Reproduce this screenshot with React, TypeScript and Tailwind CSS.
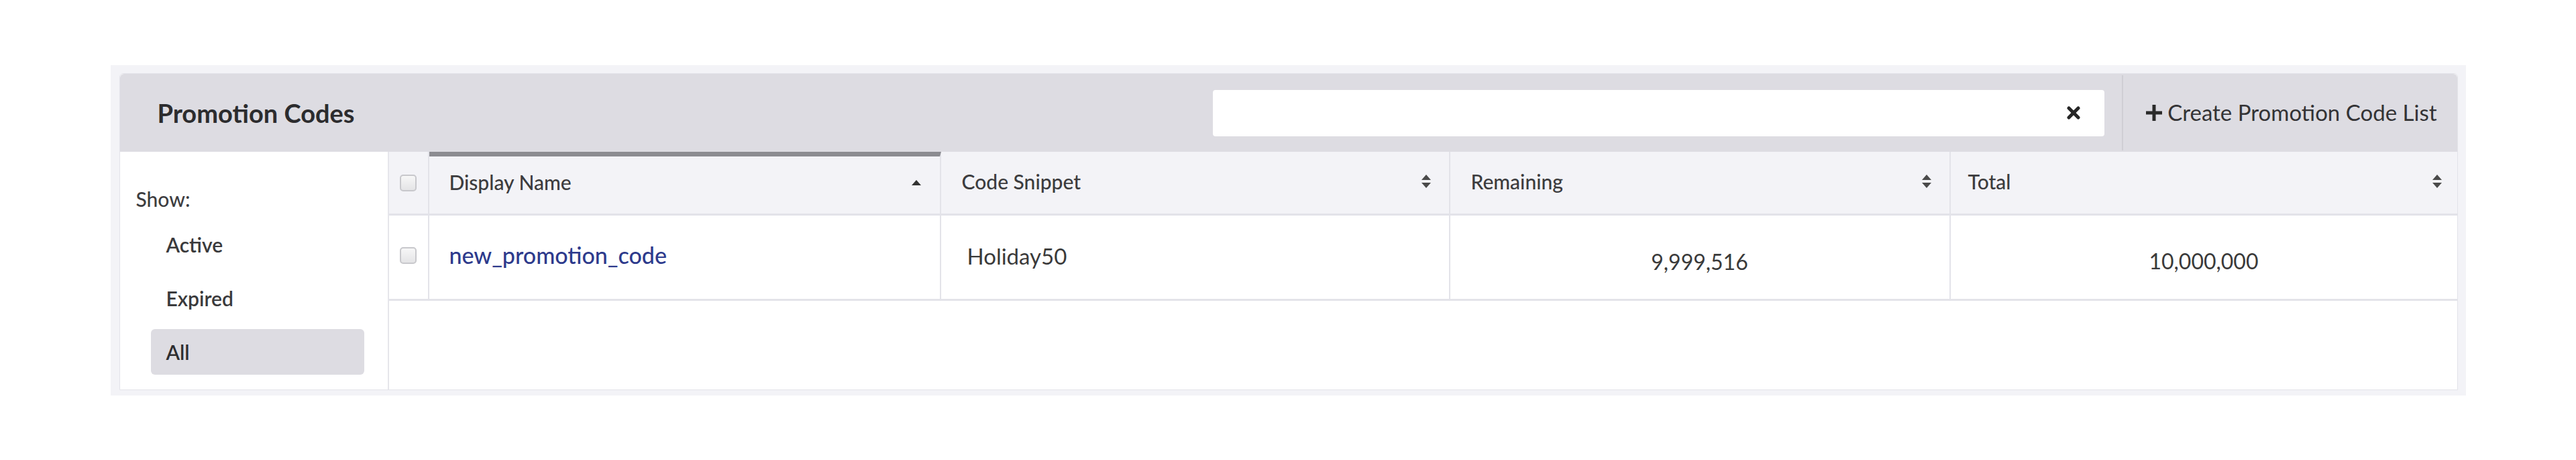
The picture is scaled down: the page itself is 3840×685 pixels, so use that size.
import React from 'react'

const font = { fontFamily: 'Lato, "Open Sans", sans-serif' }

function SortBoth() {
  return (
    <svg width="16" height="20" viewBox="0 0 16 20" className="shrink-0">
      <polygon points="8,0 15,8 1,8" fill="#4a4a4a" />
      <polygon points="1,12 15,12 8,20" fill="#4a4a4a" />
    </svg>
  )
}

function SortUp() {
  return (
    <svg width="14" height="8" viewBox="0 0 14 8" className="shrink-0">
      <polygon points="7,0 14,8 0,8" fill="#333333" />
    </svg>
  )
}

function Checkbox() {
  return (
    <span className="block w-[25px] h-[25px] rounded-[5px] border-2 border-[#c8c8cc] bg-gradient-to-b from-[#f7f7f7] to-[#e4e4e6]" />
  )
}

const columns = [
  { key: 'name', label: 'Display Name', sort: 'up' },
  { key: 'snippet', label: 'Code Snippet', sort: 'both' },
  { key: 'remaining', label: 'Remaining', sort: 'both' },
  { key: 'total', label: 'Total', sort: 'both' },
]

const filters = [
  { label: 'Active', active: false },
  { label: 'Expired', active: false },
  { label: 'All', active: true },
]

export default function App() {
  return (
    <div className="min-h-[685px] bg-white pt-[97px]" style={font}>
      <div className="w-[3511px] mx-auto bg-[#f3f3f7] pt-[12px] pb-[8px] pl-[13px] pr-[12px]">
        <div className="bg-white border border-[#e3e3e9] rounded-t-[6px]">
          {/* header */}
          <div className="flex h-[116px] items-stretch bg-[#dddce2] rounded-t-[6px]">
            <div className="flex items-center pl-[56px] text-[38px] font-bold text-[#2c2c2e] flex-1">
              Promotion Codes
            </div>
            <div className="flex items-center mr-[26px]">
              <div className="w-[1329px] h-[69px] bg-white rounded-[4px] flex items-center justify-end pr-[36px]">
                <svg width="20" height="20" viewBox="0 0 20 20">
                  <line x1="3" y1="3" x2="17" y2="17" stroke="#262626" strokeWidth="5" strokeLinecap="round" />
                  <line x1="17" y1="3" x2="3" y2="17" stroke="#262626" strokeWidth="5" strokeLinecap="round" />
                </svg>
              </div>
            </div>
            <div className="w-[2px] bg-[#cfced4] my-[2px]" />
            <div className="flex items-center gap-[8px] pl-[34px] pr-[30px] text-[33px] text-[#333335]">
              <svg width="24" height="24" viewBox="0 0 24 24">
                <rect x="9.5" y="0" width="5" height="24" fill="#2a2a2a" />
                <rect x="0" y="9.5" width="24" height="5" fill="#2a2a2a" />
              </svg>
              <span>Create Promotion Code List</span>
            </div>
          </div>

          {/* body */}
          <div className="flex h-[354px]">
            <div className="w-[401px] shrink-0 border-r-2 border-[#e6e6eb] pt-[50px]">
              <div className="h-[40px] flex items-center pl-[24px] text-[30px] font-medium text-[#3d3d3f]">
                Show:
              </div>
              <div className="flex flex-col gap-[12px] mt-[14px] pl-[46px] pr-[35px]">
                {filters.map((f) => (
                  <div
                    key={f.label}
                    className={
                      f.active
                        ? 'h-[68px] flex items-center pl-[23px] rounded-[6px] bg-[#dddce2] text-[30px] font-semibold text-[#2e2e30]'
                        : 'h-[68px] flex items-center pl-[23px] rounded-[6px] text-[30px] font-semibold text-[#3a3a3c]'
                    }
                  >
                    {f.label}
                  </div>
                ))}
              </div>
            </div>

            <div className="flex-1">
              {/* table header */}
              <div className="grid grid-cols-[60px_763px_759px_746px_1fr] h-[95px] bg-[#f3f3f7] border-b-[3px] border-[#e3e3e9]">
                <div className="flex items-center justify-center border-r-2 border-[#e3e3e9]">
                  <Checkbox />
                </div>
                {columns.map((c, i) => (
                  <div
                    key={c.key}
                    className={
                      c.sort === 'up'
                        ? 'flex items-center justify-between pl-[30px] pr-[28px] pb-[8px] border-t-[7px] border-t-[#8c8c91] border-r-2 border-r-[#e3e3e9]'
                        : i === columns.length - 1
                          ? 'flex items-center justify-between pl-[26px] pr-[22px] pb-[4px]'
                          : 'flex items-center justify-between pl-[31px] pr-[26px] pb-[4px] border-r-2 border-[#e3e3e9]'
                    }
                  >
                    <span className="text-[30px] font-medium text-[#3c3c3e]">{c.label}</span>
                    {c.sort === 'up' ? <SortUp /> : <SortBoth />}
                  </div>
                ))}
              </div>

              {/* row */}
              <div className="grid grid-cols-[60px_763px_759px_746px_1fr] h-[127px] border-b-[3px] border-[#e3e3e9]">
                <div className="flex items-center justify-center border-r-2 border-[#e3e3e9] pb-[6px]">
                  <Checkbox />
                </div>
                <div className="flex items-center pl-[30px] pb-[8px] border-r-2 border-[#e3e3e9]">
                  <a className="text-[34px] font-medium text-[#2d3a8c]">new_promotion_code</a>
                </div>
                <div className="flex items-center pl-[39px] pb-[2px] border-r-2 border-[#e3e3e9] text-[33px] text-[#3a3a3a]">
                  Holiday50
                </div>
                <div className="flex items-center justify-center pt-[14px] border-r-2 border-[#e3e3e9] text-[32px] text-[#3a3a3a]">
                  9,999,516
                </div>
                <div className="flex items-center justify-center pt-[12px] text-[32px] text-[#3a3a3a]">
                  10,000,000
                </div>
              </div>
            </div>
          </div>
        </div>
      </div>
    </div>
  )
}
